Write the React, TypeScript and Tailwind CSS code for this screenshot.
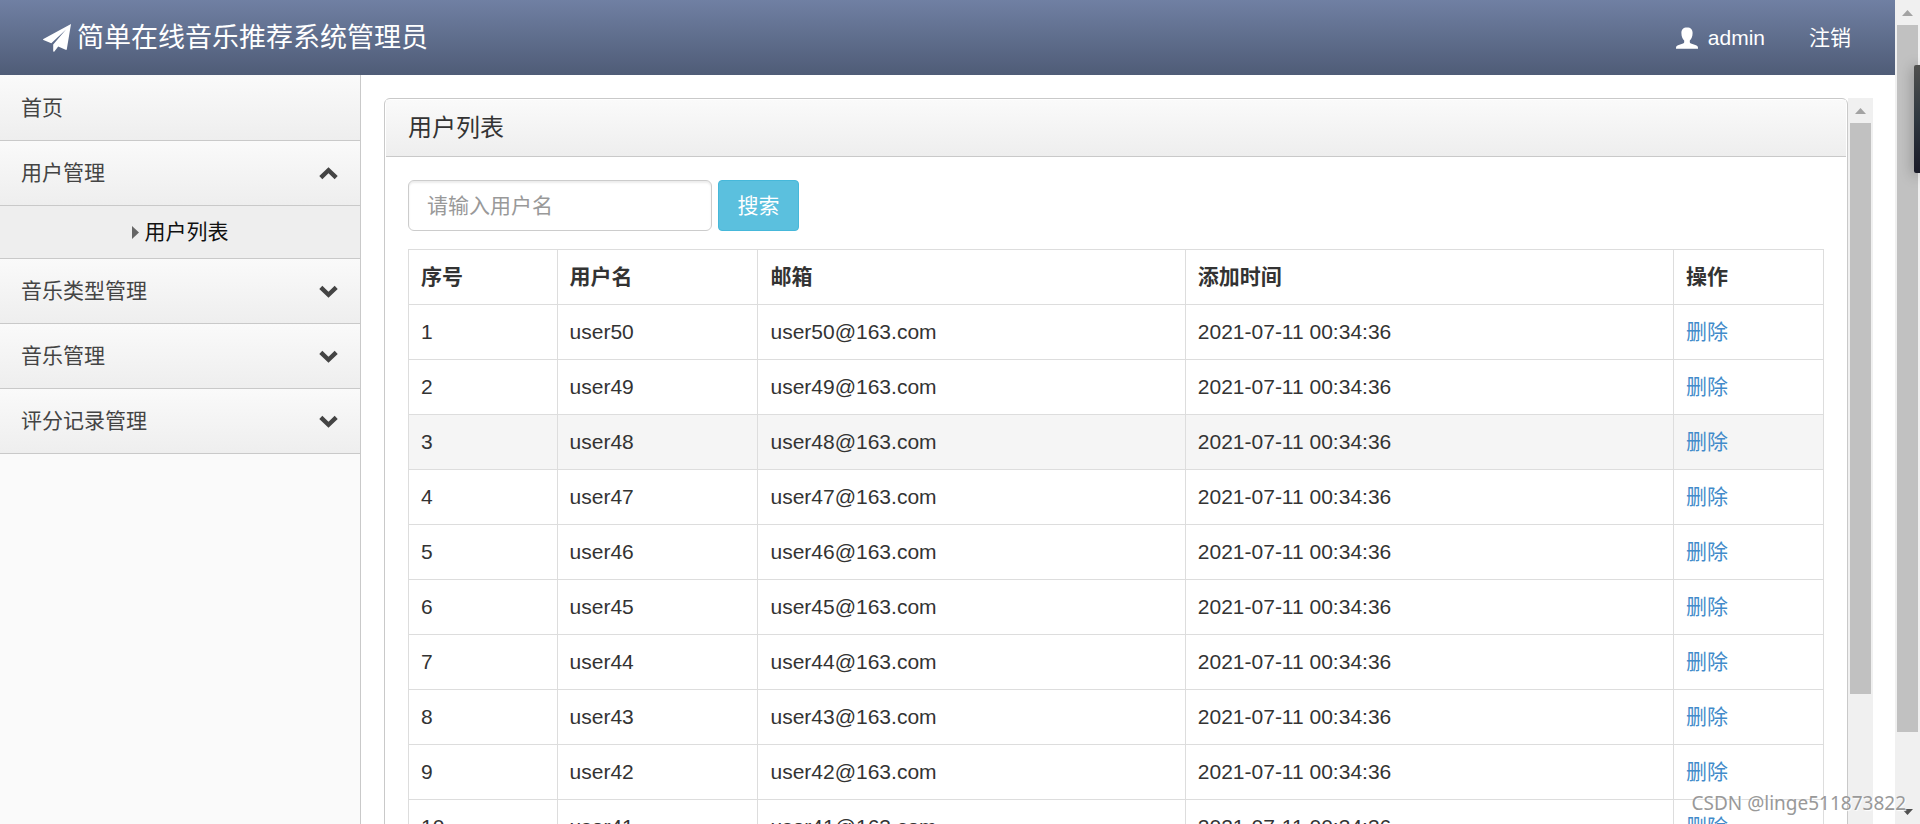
import React, { useState } from 'react';

const menu = [
  { title: '首页', children: [] as string[], collapsible: false },
  { title: '用户管理', children: ['用户列表'], collapsible: true },
  { title: '音乐类型管理', children: [] as string[], collapsible: true },
  { title: '音乐管理', children: [] as string[], collapsible: true },
  { title: '评分记录管理', children: [] as string[], collapsible: true }
];

const users = Array.from({ length: 10 }, (_, i) => ({
  id: i + 1,
  name: `user${50 - i}`,
  email: `user${50 - i}@163.com`,
  createdAt: '2021-07-11 00:34:36'
}));

const SendIcon = () => (
  <svg width="28" height="28" viewBox="0 0 28 28" fill="#fff" aria-hidden="true">
    <path d="M28 0L0.4 15C-0.1 15.3 -0.1 15.8 0.4 16L8.3 19.2L23 5.5L10.2 20.6V27C10.2 27.8 10.9 28 11.4 27.4L15.2 22.6L22.6 25.8C23.2 26 23.7 25.8 23.8 25.2Z" />
  </svg>
);

const UserIcon = () => (
  <svg width="22" height="22" viewBox="0 0 22 22" fill="#fff" aria-hidden="true">
    <path d="M11 0.4C14.8 0.4 16.6 2.4 16.6 6C16.6 9.4 15.4 12 13.8 13.6V15C13.8 15.8 14.3 16.1 15 16.4L20 18.2C21.4 18.8 22 19.6 22 21V21.7H0V21C0 19.6 0.6 18.8 2 18.2L7 16.4C7.7 16.1 8.2 15.8 8.2 15V13.6C6.6 12 5.4 9.4 5.4 6C5.4 2.4 7.2 0.4 11 0.4Z" />
  </svg>
);

const Chevron = ({ up }: { up: boolean }) => (
  <svg width="19" height="13" viewBox="0 0 19 13" fill="none" stroke="#444" strokeWidth="4.4" aria-hidden="true">
    <path d={up ? 'M1.8 10.6L9.5 3.2L17.2 10.6' : 'M1.8 2.4L9.5 9.8L17.2 2.4'} />
  </svg>
);

const ArrowUp = () => (
  <svg width="11" height="6" viewBox="0 0 11 6" fill="#a3a3a3" aria-hidden="true">
    <path d="M5.5 0L11 6H0Z" />
  </svg>
);

const ArrowDown = () => (
  <svg width="11" height="6" viewBox="0 0 11 6" fill="#505050" aria-hidden="true">
    <path d="M5.5 6L11 0H0Z" />
  </svg>
);

const App = () => {
  const [open, setOpen] = useState('用户管理');
  const [keyword, setKeyword] = useState('');

  return (
    <div className="relative flex h-screen overflow-hidden bg-white font-['Liberation_Sans','Noto_Sans_CJK_SC',sans-serif] text-[21px] leading-[30px] text-[#333]">
      <div className="flex min-w-0 flex-1 flex-col">
        <header className="flex h-[75px] shrink-0 items-center justify-between bg-linear-to-b from-[#7080a3] to-[#4f5c77] pr-11 pl-[43px] text-white">
          <h1 className="flex items-center gap-1.5 text-[27px]">
            <SendIcon />
            简单在线音乐推荐系统管理员
          </h1>
          <nav className="flex items-center gap-11">
            <a href="#admin" className="flex items-center gap-2.5">
              <UserIcon />
              admin
            </a>
            <a href="#logout">注销</a>
          </nav>
        </header>

        <div className="flex min-h-0 flex-1">
          {/* Sidebar */}
          <aside className="w-[361px] shrink-0 border-r border-[#c9c9c9] bg-[#fafafa] pt-px">
            <ul>
              {menu.map(item => (
                <li key={item.title} className="border-b border-[#c9c9c9]">
                  <button
                    onClick={() => setOpen(open === item.title ? '' : item.title)}
                    className="flex h-16 w-full items-center justify-between bg-linear-to-b from-[#fafafa] to-[#eee] pr-[22px] pl-[21px] text-[#444]"
                  >
                    {item.title}
                    {item.collapsible && <Chevron up={open === item.title} />}
                  </button>
                  {open === item.title && item.children.map(child => (
                    <a
                      key={child}
                      href="#users"
                      className="flex h-[53px] items-center justify-center gap-1.5 border-t border-[#c9c9c9] bg-[#eee] text-[#111]"
                    >
                      <svg width="7" height="13" viewBox="0 0 7 13" fill="#666" aria-hidden="true">
                        <path d="M0 0L7 6.5L0 13Z" />
                      </svg>
                      {child}
                    </a>
                  ))}
                </li>
              ))}
            </ul>
          </aside>

          {/* Content */}
          <main className="flex min-w-0 flex-1 overflow-hidden pt-[23px] pr-[22px] pl-[23px]">
            <section className="min-w-0 flex-1 self-start rounded-md border border-[#c9c9c9]">
              <h2 className="m-px mb-0 flex h-[57px] items-center border-b border-[#c9c9c9] bg-linear-to-b from-[#fafafa] to-[#eee] px-[22px] text-2xl">
                用户列表
              </h2>
              <div className="px-[23px] pt-[23px] pb-6">
                <form className="mb-[18px] flex gap-1.5" onSubmit={e => e.preventDefault()}>
                  <input
                    type="text"
                    aria-label="用户名"
                    placeholder="请输入用户名"
                    value={keyword}
                    onChange={e => setKeyword(e.target.value)}
                    className="h-[51px] w-[304px] rounded-md border border-[#ccc] bg-white px-[18px] shadow-[inset_0_2px_2px_rgba(0,0,0,0.075)] placeholder:text-[#999]"
                  />
                  <button
                    type="submit"
                    className="h-[51px] w-[81px] rounded-sm border border-[#46b8da] bg-[#5bc0de] text-white"
                  >
                    搜索
                  </button>
                </form>
                <table className="w-full table-fixed border-collapse text-left">
                  <colgroup>
                    <col className="w-[10.5%]" />
                    <col className="w-[14.2%]" />
                    <col className="w-[30.2%]" />
                    <col className="w-[34.5%]" />
                    <col className="w-[10.6%]" />
                  </colgroup>
                  <thead>
                    <tr>
                      {['序号', '用户名', '邮箱', '添加时间', '操作'].map(head => (
                        <th key={head} className="h-[55px] border border-[#ddd] px-3 font-bold">{head}</th>
                      ))}
                    </tr>
                  </thead>
                  <tbody>
                    {users.map(user => (
                      <tr key={user.id} className={user.id === 3 ? 'bg-[#f5f5f5]' : 'hover:bg-[#f5f5f5]'}>
                        <td className="h-[55px] border border-[#ddd] px-3">{user.id}</td>
                        <td className="border border-[#ddd] px-3">{user.name}</td>
                        <td className="border border-[#ddd] px-3">{user.email}</td>
                        <td className="border border-[#ddd] px-3">{user.createdAt}</td>
                        <td className="border border-[#ddd] px-3">
                          <a href="#delete" className="text-[#428bca]">删除</a>
                        </td>
                      </tr>
                    ))}
                  </tbody>
                </table>
              </div>
            </section>
            <div className="flex w-[25px] shrink-0 flex-col items-center bg-[#f0f0f0]">
              <div className="flex h-[25px] shrink-0 items-center">
                <ArrowUp />
              </div>
              <div className="h-[571px] w-[21px] shrink-0 bg-[#c1c1c1]" />
            </div>
          </main>
        </div>
      </div>

      {/* Page scrollbar */}
      <div className="flex w-[25px] shrink-0 flex-col items-center bg-[#f0f0f0]">
        <div className="flex h-[25px] shrink-0 items-center">
          <ArrowUp />
        </div>
        <div className="h-[707px] w-[21px] shrink-0 bg-[#c1c1c1]" />
        <div className="mt-auto flex h-[25px] shrink-0 items-center">
          <ArrowDown />
        </div>
      </div>

      <div className="absolute top-[65px] right-0 h-[108px] w-1.5 rounded-l-xs bg-linear-to-b from-[#50504e] via-[#2f3840] to-[#1a1b28] shadow-[0_2px_14px_rgba(0,0,0,0.4)]" />

      <p className="absolute right-[14px] bottom-[7px] font-['Noto_Sans',sans-serif] text-[19px] leading-7 text-[#999] [text-shadow:1px_1px_1px_#fff]">
        CSDN @linge511873822
      </p>
    </div>
  );
};

export default App;
